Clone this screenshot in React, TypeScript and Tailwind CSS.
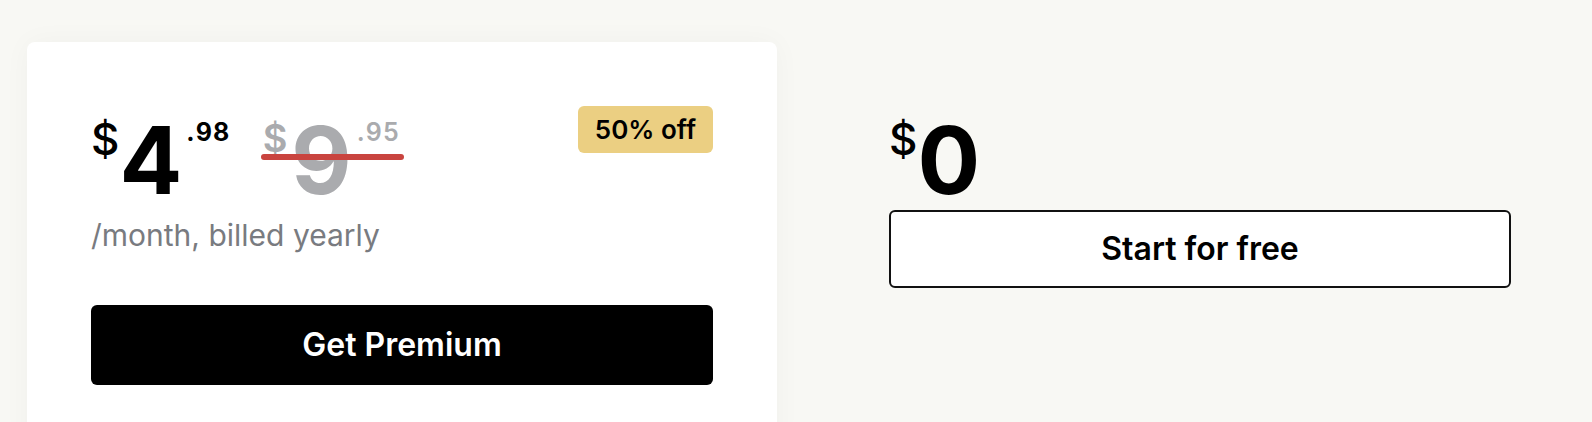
import React from "react";

const font = { fontFamily: "Inter, 'Noto Sans', sans-serif" };

const PricingCards = () => {
  return (
    <div className="min-h-screen w-full bg-[#f8f8f4] flex gap-[48px] pl-[27px] pt-[42px] overflow-hidden" style={font}>
      <div className="w-[750px] shrink-0 bg-white rounded-lg shadow-[0_0_28px_rgba(0,0,0,0.035)] p-16">
        <div className="flex justify-between items-start">
          <div className="flex items-start">
            <span className="text-[44px] leading-none font-medium text-black mt-[11px]">$</span>
            <span className="text-[93px] leading-none font-bold text-black mt-[8px]">4</span>
            <span className="text-[25px] leading-none font-bold tracking-[0.05em] text-black mt-[14px] ml-[4px]">.98</span>
            <div className="relative flex items-start ml-[32px]">
              <span className="text-[38px] leading-none font-semibold text-[#aaabae] mt-[13px] mr-[4px]">$</span>
              <span className="text-[93px] leading-none font-bold text-[#aaabae] mt-[8px]">9</span>
              <span className="text-[25px] leading-none font-semibold tracking-[0.05em] text-[#aaabae] mt-[14px] ml-[5px]">.95</span>
              <div className="absolute left-[-2px] right-[-4px] top-[48px] h-[6px] rounded-full bg-[#c9443f]" />
            </div>
          </div>
          <div className="h-[47px] px-[17px] flex items-center rounded-md bg-[#ebcf82] text-[26px] font-semibold text-black">
            50% off
          </div>
        </div>
        <p className="text-[30px] leading-[36px] text-[#797b80] mt-[10px]">/month, billed yearly</p>
        <button className="mt-[52px] w-full h-[80px] rounded-md bg-black text-white text-[32px] font-semibold">
          Get Premium
        </button>
      </div>

      <div className="w-[750px] shrink-0 p-16">
        <div className="flex items-start">
          <span className="text-[44px] leading-none font-medium text-black mt-[11px]">$</span>
          <span className="text-[93px] leading-none font-bold text-black mt-[8px]">0</span>
        </div>
        <button className="mt-[3px] w-full h-[78px] rounded-md border-2 border-[#111] bg-white text-black text-[32px] font-semibold">
          Start for free
        </button>
      </div>
    </div>
  );
};

export default function App() {
  return <PricingCards />;
}
